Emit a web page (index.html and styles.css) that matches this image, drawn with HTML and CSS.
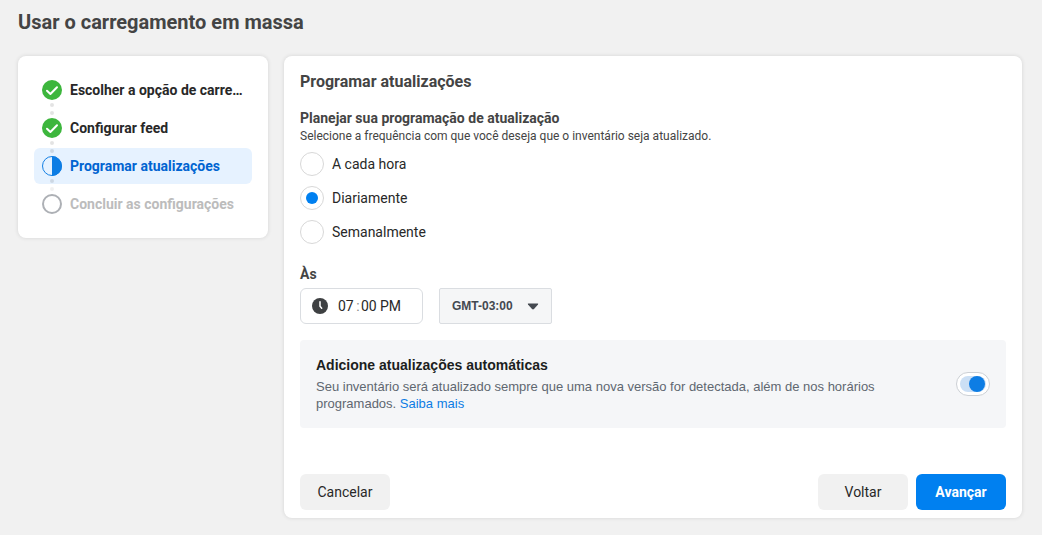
FILE: index.html
```html
<!DOCTYPE html>
<html lang="pt-BR">
<head>
<meta charset="utf-8">
<meta name="viewport" content="width=device-width, initial-scale=1">
<title>Usar o carregamento em massa</title>
<link rel="stylesheet" href="styles.css">
</head>
<body>
<h1 class="page-title">Usar o carregamento em massa</h1>
<div class="layout">
  <nav class="card steps" aria-label="Etapas">
    <ol class="step-list">
      <li class="step">
        <svg class="step-icon" viewBox="0 0 20 20" aria-hidden="true"><circle cx="10" cy="10" r="10" fill="#3db63d"/><path d="M5 10.7 8.4 14 15 7.2" fill="none" stroke="#fff" stroke-width="2" stroke-linecap="round" stroke-linejoin="round"/></svg>
        <span class="step-label">Escolher a opção de carregamento</span>
      </li>
      <li class="step">
        <svg class="step-icon" viewBox="0 0 20 20" aria-hidden="true"><circle cx="10" cy="10" r="10" fill="#3db63d"/><path d="M5 10.7 8.4 14 15 7.2" fill="none" stroke="#fff" stroke-width="2" stroke-linecap="round" stroke-linejoin="round"/></svg>
        <span class="step-label">Configurar feed</span>
      </li>
      <li class="step step-current" aria-current="step">
        <svg class="step-icon" viewBox="0 0 20 20" aria-hidden="true"><circle cx="10" cy="10" r="9.5" fill="none" stroke="#1480e4"/><path d="M10 0a10 10 0 0 1 0 20z" fill="#0d7de4"/></svg>
        <span class="step-label">Programar atualizações</span>
      </li>
      <li class="step step-pending">
        <svg class="step-icon" viewBox="0 0 20 20" aria-hidden="true"><circle cx="10" cy="10" r="9" fill="none" stroke="#adb0b5" stroke-width="2"/></svg>
        <span class="step-label">Concluir as configurações</span>
      </li>
    </ol>
  </nav>
  <main class="card panel">
    <h2 class="panel-title">Programar atualizações</h2>
    <h3 class="section-title">Planejar sua programação de atualização</h3>
    <p class="section-text">Selecione a frequência com que você deseja que o inventário seja atualizado.</p>
    <div class="options" role="radiogroup" aria-label="Frequência">
      <label class="option"><input class="radio" type="radio" name="freq">A cada hora</label>
      <label class="option"><input class="radio" type="radio" name="freq" checked>Diariamente</label>
      <label class="option"><input class="radio" type="radio" name="freq">Semanalmente</label>
    </div>
    <h3 class="section-title at-title">Às</h3>
    <div class="time-row">
      <div class="time-box">
        <svg class="clock" viewBox="0 0 16 16" aria-hidden="true"><circle cx="8" cy="8" r="8" fill="#3e4042"/><path d="M8 3.7v4.5l1.7 2" fill="none" stroke="#fff" stroke-width="1.5" stroke-linecap="round" stroke-linejoin="round"/></svg>
        <input class="time-part" type="text" value="07" aria-label="Hora">
        <span class="colon">:</span>
        <input class="time-part" type="text" value="00" aria-label="Minuto">
        <input class="time-part meridiem" type="text" value="PM" aria-label="AM ou PM">
      </div>
      <div class="zone">
        <select class="zone-select" aria-label="Fuso horário"><option>GMT-03:00</option></select>
        <svg class="caret" viewBox="0 0 12 7" aria-hidden="true"><path d="M1.3.5h9.4q.9.2.3 1L7 6.1Q6 7 5 6.1L1 1.5Q.4.7 1.3.5z" fill="#444950"/></svg>
      </div>
    </div>
    <section class="notice">
      <div class="notice-body">
        <h3 class="notice-title">Adicione atualizações automáticas</h3>
        <p class="notice-text">Seu inventário será atualizado sempre que uma nova versão for detectada, além de nos horários programados. <a class="link" href="#">Saiba mais</a></p>
      </div>
      <input class="switch" type="checkbox" role="switch" checked aria-label="Adicione atualizações automáticas">
    </section>
    <footer class="actions">
      <button class="btn cancel" type="button">Cancelar</button>
      <button class="btn" type="button">Voltar</button>
      <button class="btn btn-primary" type="button">Avançar</button>
    </footer>
  </main>
</div>
</body>
</html>
```
FILE: styles.css
```css
* {
  box-sizing: border-box;
}
body {
  margin: 0;
  padding: 8px 20px 16px 18px;
  background: #f1f1f1;
  color: #282828;
  font: 14px/20px Roboto, "Liberation Sans", sans-serif;
}
h1, h2, h3, p, ol {
  margin: 0;
  padding: 0;
}
.page-title {
  margin-bottom: 20px;
  color: #444;
  font-size: 20px;
  line-height: 28px;
  font-weight: 700;
}
.layout {
  display: flex;
  align-items: flex-start;
  gap: 16px;
}
.card {
  background: #fff;
  border-radius: 8px;
  box-shadow: 0 0 4px rgba(0, 0, 0, 0.12);
}
.steps {
  flex: 0 0 250px;
  min-width: 0;
  padding: 16px;
}
.step-list {
  display: flex;
  flex-direction: column;
  gap: 2px;
  list-style: none;
}
.step {
  position: relative;
  display: flex;
  align-items: center;
  gap: 8px;
  padding: 8px;
  border-radius: 6px;
  font-weight: 700;
}
.step-icon {
  flex: none;
  width: 20px;
  height: 20px;
}
.step-label {
  min-width: 0;
  overflow: hidden;
  text-overflow: ellipsis;
  white-space: nowrap;
}
.step-current {
  background: #e6f2ff;
  color: #0064d1;
}
.step-pending {
  color: #bcbcbc;
}
/* Two connector dots that bridge a step and the next one */
.step:not(:last-child)::after {
  content: "";
  position: absolute;
  z-index: 1;
  left: 16px;
  top: 31px;
  width: 4px;
  height: 4px;
  border-radius: 50%;
  background: rgba(0, 0, 0, 0.11);
  box-shadow: 0 8px 0 rgba(0, 0, 0, 0.11);
}
.step-current:not(:last-child)::after {
  box-shadow: 0 8px 0 rgba(0, 0, 0, 0.06);
}
.panel {
  flex: 1;
  min-width: 0;
  padding: 16px 16px 8px;
}
.panel-title {
  margin-bottom: 16px;
  color: #444;
  font-size: 16px;
  font-weight: 700;
}
.section-title {
  color: #444;
  font-size: 14px;
  font-weight: 700;
}
.section-text {
  color: #444;
  font-size: 12px;
  line-height: 16px;
}
.options {
  display: flex;
  flex-direction: column;
  align-items: flex-start;
  gap: 10px;
  margin: 8px 0 20px;
}
.option {
  display: flex;
  align-items: center;
  gap: 8px;
}
.radio {
  appearance: none;
  display: grid;
  place-items: center;
  width: 24px;
  height: 24px;
  margin: 0;
  border: 1px solid #d8d8d8;
  border-radius: 50%;
  background: #fff;
}
.radio:checked::before {
  content: "";
  width: 12px;
  height: 12px;
  border-radius: 50%;
  background: #0080f0;
}
.at-title {
  margin-bottom: 4px;
}
.time-row {
  display: flex;
  gap: 16px;
  margin-bottom: 16px;
}
.time-box {
  display: flex;
  align-items: center;
  width: 123px;
  height: 36px;
  padding: 0 11px;
  border: 1px solid #dadde1;
  border-radius: 6px;
}
.clock {
  width: 16px;
  height: 16px;
  margin-right: 10px;
}
.time-part {
  width: 17px;
  height: 20px;
  padding: 0;
  border: 0;
  background: none;
  color: inherit;
  font: inherit;
}
.meridiem {
  width: 24px;
  margin-left: 2px;
}
.colon {
  width: 6px;
  color: #888;
  text-align: center;
}
.zone {
  position: relative;
  width: 113px;
}
.zone-select {
  appearance: none;
  width: 100%;
  height: 36px;
  padding: 0 12px;
  border: 1px solid #dadde1;
  border-radius: 2px;
  background: #f5f6f7;
  color: #444950;
  font: bold 12px/16px "Liberation Sans", Arial, sans-serif;
}
.caret {
  position: absolute;
  right: 13px;
  top: 15px;
  width: 12px;
  height: 7px;
  pointer-events: none;
}
.notice {
  display: flex;
  align-items: center;
  justify-content: space-between;
  gap: 64px;
  padding: 16px;
  border-radius: 4px;
  background: #f5f6f8;
  font-family: "Liberation Sans", Arial, sans-serif;
}
.notice-title {
  margin-bottom: 4px;
  color: #1c1e21;
  font-size: 14px;
  line-height: 18px;
  font-weight: 700;
}
.notice-text {
  color: #606770;
  font-size: 13px;
  line-height: 17px;
}
.link {
  color: #0d7de4;
  text-decoration: none;
}
.switch {
  appearance: none;
  flex: none;
  position: relative;
  width: 34px;
  height: 24px;
  margin: 0;
  border: 1px solid #ccd0d5;
  border-radius: 12px;
  background: #fff;
}
.switch::before {
  content: "";
  position: absolute;
  inset: 3px;
  border-radius: 8px;
  background: #cbdff5;
}
.switch::after {
  content: "";
  position: absolute;
  top: 3px;
  left: 3px;
  width: 16px;
  height: 16px;
  border-radius: 50%;
  background: #90949c;
}
.switch:checked::after {
  left: auto;
  right: 4px;
  background: #0d7de4;
}
.actions {
  display: flex;
  gap: 8px;
  margin-top: 46px;
}
.btn {
  min-width: 90px;
  height: 36px;
  padding: 0 16px;
  border: 0;
  border-radius: 6px;
  background: #f1f1f1;
  color: #282828;
  font: inherit;
}
.cancel {
  margin-right: auto;
}
.btn-primary {
  background: #0080f0;
  color: #fff;
  font-weight: 700;
}
```
